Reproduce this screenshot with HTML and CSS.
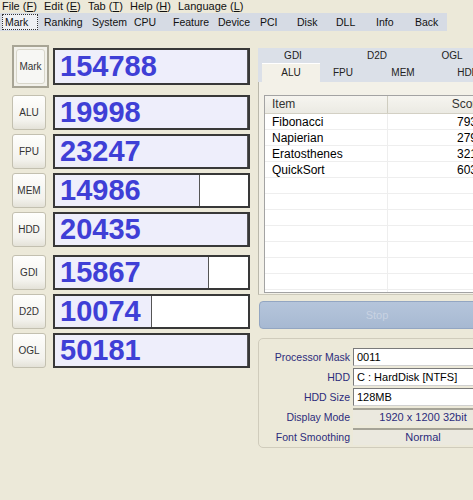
FILE: index.html
```html
<!DOCTYPE html>
<html>
<head>
<meta name="viewport" content="width=device-width, initial-scale=1">
<link rel="stylesheet" href="styles.css">
</head>
<body>

<div class="menubar">
  <span>File (<u>F</u>)</span>
  <span>Edit (<u>E</u>)</span>
  <span>Tab (<u>T</u>)</span>
  <span>Help (<u>H</u>)</span>
  <span>Language (<u>L</u>)</span>
</div>

<div class="tabbar">
  <span class="tab tab--active">Mark</span>
  <span class="tab">Ranking</span>
  <span class="tab">System</span>
  <span class="tab">CPU</span>
  <span class="tab">Feature</span>
  <span class="tab">Device</span>
  <span class="tab">PCI</span>
  <span class="tab">Disk</span>
  <span class="tab">DLL</span>
  <span class="tab">Info</span>
  <span class="tab">Back</span>
</div>

<div class="main">

  <div class="scores">
    <div class="row row--mark">
      <div class="btn-frame"><button class="btn">Mark</button></div>
      <div class="meter"><div class="meter__fill" style="width:100%"><span class="meter__value">154788</span></div></div>
    </div>

    <div class="group">
      <div class="row">
        <button class="btn">ALU</button>
        <div class="meter"><div class="meter__fill" style="width:100%"><span class="meter__value">19998</span></div></div>
      </div>
      <div class="row">
        <button class="btn">FPU</button>
        <div class="meter"><div class="meter__fill" style="width:100%"><span class="meter__value">23247</span></div></div>
      </div>
      <div class="row">
        <button class="btn">MEM</button>
        <div class="meter"><div class="meter__fill" style="width:75%"><span class="meter__value">14986</span></div></div>
      </div>
      <div class="row">
        <button class="btn">HDD</button>
        <div class="meter"><div class="meter__fill" style="width:100%"><span class="meter__value">20435</span></div></div>
      </div>
    </div>

    <div class="group">
      <div class="row">
        <button class="btn">GDI</button>
        <div class="meter"><div class="meter__fill" style="width:80%"><span class="meter__value">15867</span></div></div>
      </div>
      <div class="row">
        <button class="btn">D2D</button>
        <div class="meter"><div class="meter__fill" style="width:50%"><span class="meter__value">10074</span></div></div>
      </div>
      <div class="row">
        <button class="btn">OGL</button>
        <div class="meter"><div class="meter__fill" style="width:100%"><span class="meter__value">50181</span></div></div>
      </div>
    </div>
  </div>

  <div class="side">
    <div class="tabctl">
      <div class="tabctl__strip">
        <div class="tabctl__row tabctl__row--top">
          <span>GDI</span><span>D2D</span><span>OGL</span>
        </div>
        <div class="tabctl__row tabctl__row--bottom">
          <span class="tabctl__tab--active">ALU</span><span>FPU</span><span>MEM</span><span>HDD</span>
        </div>
      </div>
      <div class="tabctl__page">
        <div class="list">
          <div class="list__head">
            <span class="list__name">Item</span>
            <span class="list__score">Score</span>
          </div>
          <div class="list__row"><span class="list__name">Fibonacci</span><span class="list__score">793</span></div>
          <div class="list__row"><span class="list__name">Napierian</span><span class="list__score">279</span></div>
          <div class="list__row"><span class="list__name">Eratosthenes</span><span class="list__score">321</span></div>
          <div class="list__row"><span class="list__name">QuickSort</span><span class="list__score">603</span></div>
          <div class="list__row"><span class="list__name"></span><span class="list__score"></span></div>
          <div class="list__row"><span class="list__name"></span><span class="list__score"></span></div>
          <div class="list__row"><span class="list__name"></span><span class="list__score"></span></div>
          <div class="list__row"><span class="list__name"></span><span class="list__score"></span></div>
          <div class="list__row"><span class="list__name"></span><span class="list__score"></span></div>
          <div class="list__row"><span class="list__name"></span><span class="list__score"></span></div>
          <div class="list__row"><span class="list__name"></span><span class="list__score"></span></div>
          <div class="list__row"><span class="list__name"></span><span class="list__score"></span></div>
        </div>
      </div>
    </div>

    <button class="stop" disabled>Stop</button>

    <div class="info">
      <span class="info__label">Processor Mask</span><span class="info__field">0011</span>
      <span class="info__label">HDD</span><span class="info__field">C : HardDisk [NTFS]</span>
      <span class="info__label">HDD Size</span><span class="info__field">128MB</span>
      <span class="info__label">Display Mode</span><span class="info__static">1920 x 1200 32bit</span>
      <span class="info__label">Font Smoothing</span><span class="info__static">Normal</span>
    </div>
  </div>

</div>

</body>
</html>
```

FILE: styles.css
```css
/* basic setup */
* {box-sizing: border-box;}

body {
  margin: 0;
  width: 473px;
  height: 500px;
  overflow: hidden;
  background: #ece9d9;
  font-family: "Liberation Sans", Arial, sans-serif;
  color: #000;
}

/* menu + main tab bar */
.menubar {
  display: grid;
  grid-template-columns: 42px 44px 42px 48px auto;
  height: 13px;
  padding-left: 2px;
  font-size: 11px;
  line-height: 13px;
  color: #111;
}

.tabbar {
  display: grid;
  grid-template-columns: 39px 48px 42px 39px 45px 42px 37px 39px 40px 39px 35px;
  width: 447px;
  height: 18px;
  padding-left: 2px;
  background: #d6dbe4;
  font-size: 10.5px;
  line-height: 18px;
  color: #111;
}
.tab {
  padding-left: 3px;
}
.tab--active {
  margin: 1px 3px 1px 0;
  padding-left: 2px;
  line-height: 14px;
  border: 1px dotted #333;
  background: #eef0f4;
}

.main {
  display: flex;
  gap: 8px;
  padding: 14px 0 0 12px;
}

/* left: score meters */
.scores {
  width: 238px;
  flex-shrink: 0;
}
.group {
  display: flex;
  flex-direction: column;
  gap: 4px;
  margin-bottom: 8px;
}
.row {
  display: grid;
  grid-template-columns: 41px 197px;
  align-items: center;
  height: 35px;
}
.row--mark {
  height: 43px;
  margin-bottom: 7px;
}

.btn {
  width: 34px;
  height: 35px;
  padding: 0;
  border: 1px solid #c3c0b0;
  border-radius: 3px;
  background: linear-gradient(#fefefc, #f3f2ed 75%, #e4e2d8);
  font-family: "Liberation Sans", Arial, sans-serif;
  font-size: 10px;
  color: #333;
}
.btn-frame {
  width: 37px;
  height: 43px;
  padding: 2px;
  border: 2px solid #a8a595;
  background: #f2f1ea;
}
.btn-frame .btn {
  width: 100%;
  height: 100%;
  border-color: #d8d6ca;
  background: #f7f7f4;
}

.meter {
  display: flex;
  height: 35px;
  border: 2px solid #383838;
  background: #fff;
}
.row--mark .meter {
  height: 37px;
}
.meter__fill {
  display: flex;
  align-items: center;
  padding-left: 5px;
  white-space: nowrap;
  background: #eeeefb;
  border-right: 1px solid #555;
}
.meter__value {
  font-size: 29px;
  font-weight: bold;
  color: #3f3fd6;
}

/* right: sub tabs, list, info */
.side {
  width: 240px;
  flex-shrink: 0;
  margin-top: 3px;
}

.tabctl__strip {
  height: 34px;
  background: #dbe0e8;
  font-size: 10px;
  color: #222;
}
.tabctl__row {
  display: grid;
  text-align: center;
}
.tabctl__row--top {
  grid-template-columns: 70px 98px 52px;
  height: 15px;
  line-height: 16px;
}
.tabctl__row--bottom {
  grid-template-columns: 58px 46px 74px 56px;
  height: 19px;
  padding-left: 4px;
  line-height: 19px;
}
.tabctl__tab--active {
  background: #f3f1e8;
  border-top: 1px solid #fff;
  line-height: 17px;
}

.tabctl__page {
  height: 213px;
  padding: 13px 0 0 5px;
  background: #f3f1e8;
  border-left: 1px solid #bab8ab;
  border-bottom: 1px solid #cdcabb;
}

.list {
  width: 224px;
  height: 198px;
  overflow: hidden;
  border: 1px solid #a3a3a3;
  background: #fff;
  font-size: 12px;
}
.list__head,
.list__row {
  display: grid;
  grid-template-columns: 123px 1fr;
}
.list__head {
  height: 18px;
  line-height: 17px;
  background: linear-gradient(#f6f5f0, #ebeae3);
  border-bottom: 1px solid #d3d0c4;
  color: #333;
}
.list__head .list__name {
  border-right: 1px solid #cfcdc0;
}
.list__head .list__score {
  padding-right: 4px;
}
.list__row {
  height: 16px;
  line-height: 16px;
  border-bottom: 1px solid #eeeeee;
}
.list__row .list__name {
  border-right: 1px solid #eeeeee;
}
.list__name {
  padding-left: 7px;
}
.list__score {
  text-align: right;
  padding-right: 10px;
}

.stop {
  display: block;
  width: 236px;
  height: 28px;
  margin: 6px 0 0 1px;
  border: 1px solid #93a6c2;
  border-radius: 4px;
  background: linear-gradient(#b5c5db, #a7b9d2);
  font-family: "Liberation Sans", Arial, sans-serif;
  font-size: 11px;
  color: #c8d2e2;
}

.info {
  display: grid;
  grid-template-columns: 91px 140px;
  grid-auto-rows: 18px;
  column-gap: 3px;
  row-gap: 2px;
  height: 110px;
  margin-top: 9px;
  padding-top: 9px;
  border: 1px solid #d0ccbc;
  border-radius: 5px;
}
.info__label {
  text-align: right;
  font-size: 10.5px;
  line-height: 18px;
  color: #2c2c7c;
}
.info__field {
  padding-left: 3px;
  font-size: 11px;
  line-height: 16px;
  background: #fff;
  border: 1px solid;
  border-color: #7a7a7a #d0d0d0 #d0d0d0 #7a7a7a;
}
.info__static {
  height: 17px;
  text-align: center;
  font-size: 11px;
  line-height: 15px;
  color: #2c2c7c;
  background: #ebe9df;
  border-top: 2px solid #a5a397;
}
```
